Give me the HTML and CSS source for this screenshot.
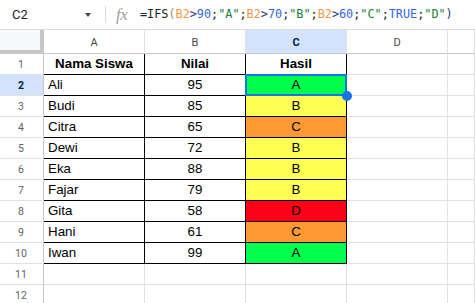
FILE: index.html
```html
<!DOCTYPE html>
<html lang="id">
<head>
<meta charset="utf-8">
<title>IFS Nilai Siswa</title>
<link rel="stylesheet" href="styles.css">
</head>
<body>
<div class="fbar">
  <div class="namebox"><span class="ref">C2</span><span class="caret"></span></div>
  <div class="sep"></div>
  <div class="fx">fx</div>
  <div class="formula">=IFS<span class="par">(</span><span class="rf">B2</span><span class="op">&gt;</span><span class="num">90</span>;<span class="str">"A"</span>;<span class="rf">B2</span><span class="op">&gt;</span><span class="num">70</span>;<span class="str">"B"</span>;<span class="rf">B2</span><span class="op">&gt;</span><span class="num">60</span>;<span class="str">"C"</span>;<span class="num">TRUE</span>;<span class="str">"D"</span><span class="par2">)</span></div>
</div>
<div class="grid">
  <div class="corner"></div>
  <div class="ch">A</div><div class="ch">B</div><div class="ch sel">C</div><div class="ch">D</div><div class="ch"></div>

  <div class="rh">1</div>
  <div class="c t b name-h">Nama Siswa</div><div class="c t b ctr">Nilai</div><div class="c t b ctr">Hasil</div><div class="c"></div><div class="c"></div>

  <div class="rh rsel">2</div>
  <div class="c t nm">Ali</div><div class="c t ctr">95</div><div class="c t ctr ga active">A<span class="selbox"><span class="handle"></span></span></div><div class="c"></div><div class="c"></div>

  <div class="rh">3</div>
  <div class="c t nm">Budi</div><div class="c t ctr">85</div><div class="c t ctr gb">B</div><div class="c"></div><div class="c"></div>

  <div class="rh">4</div>
  <div class="c t nm">Citra</div><div class="c t ctr">65</div><div class="c t ctr gc">C</div><div class="c"></div><div class="c"></div>

  <div class="rh">5</div>
  <div class="c t nm">Dewi</div><div class="c t ctr">72</div><div class="c t ctr gb">B</div><div class="c"></div><div class="c"></div>

  <div class="rh">6</div>
  <div class="c t nm">Eka</div><div class="c t ctr">88</div><div class="c t ctr gb">B</div><div class="c"></div><div class="c"></div>

  <div class="rh">7</div>
  <div class="c t nm">Fajar</div><div class="c t ctr">79</div><div class="c t ctr gb">B</div><div class="c"></div><div class="c"></div>

  <div class="rh">8</div>
  <div class="c t nm">Gita</div><div class="c t ctr">58</div><div class="c t ctr gd">D</div><div class="c"></div><div class="c"></div>

  <div class="rh">9</div>
  <div class="c t nm">Hani</div><div class="c t ctr">61</div><div class="c t ctr gc">C</div><div class="c"></div><div class="c"></div>

  <div class="rh">10</div>
  <div class="c t nm">Iwan</div><div class="c t ctr">99</div><div class="c t ctr ga">A</div><div class="c"></div><div class="c"></div>

  <div class="rh">11</div>
  <div class="c"></div><div class="c"></div><div class="c"></div><div class="c"></div><div class="c"></div>

  <div class="rh">12</div>
  <div class="c"></div><div class="c"></div><div class="c"></div><div class="c"></div><div class="c"></div>
</div>
</body>
</html>
```

FILE: styles.css
```css
html, body {
  margin: 0;
  padding: 0;
  background: #fff;
  overflow: hidden;
  height: 303px;
}
body {
  font-family: "Liberation Sans", Arial, sans-serif;
}

/* formula bar */
.fbar {
  display: flex;
  align-items: center;
  height: 29px;
  border-bottom: 1px solid #dadce0;
}
.namebox {
  width: 95px;
  box-sizing: border-box;
  padding: 0 4px 0 12px;
  display: flex;
  align-items: center;
  justify-content: space-between;
}
.ref {
  font-family: Roboto, "Liberation Sans", sans-serif;
  font-size: 13px;
  color: #202124;
}
.caret {
  width: 0;
  height: 0;
  border-left: 3.5px solid transparent;
  border-right: 3.5px solid transparent;
  border-top: 4px solid #444746;
}
.sep {
  width: 1px;
  height: 17px;
  background: #dadce0;
  margin-left: 10px;
}
.fx {
  margin-left: 10px;
  width: 15px;
  font-family: "Liberation Serif", "DejaVu Serif", serif;
  font-style: italic;
  font-size: 17px;
  color: #a0a0a0;
  letter-spacing: -0.5px;
  line-height: 29px;
}
.formula {
  margin-left: 9px;
  font-family: "DejaVu Sans Mono", "Liberation Mono", monospace;
  font-size: 11.8px;
  color: #202124;
  white-space: nowrap;
  line-height: 29px;
}
.rf { color: #f29a4a; }
.num { color: #3367d6; }
.str { color: #188038; }
.op { color: #2b3a7a; }
.par { color: #b58a5e; }
.par2 { color: #2b3a7a; }

/* grid */
.grid {
  display: grid;
  grid-template-columns: 44px 101px 101px 101px 101px 1fr;
  grid-template-rows: 24px repeat(12, 21px);
}
.grid > div {
  box-sizing: border-box;
  border-right: 1px solid #e1e1e1;
  border-bottom: 1px solid #e1e1e1;
  overflow: visible;
}
.grid > .corner {
  background: #f8f9fa;
  border-right: 4px solid #c4c7c5;
  border-bottom: 4px solid #c4c7c5;
}
.ch {
  display: flex;
  align-items: center;
  justify-content: center;
  font-family: Roboto, "Liberation Sans", sans-serif;
  font-size: 11px;
  color: #444746;
  padding-top: 1px;
}
.grid > .ch {
  border-bottom: 1px solid #c4c7c5;
}
.ch.sel {
  background: #d3e3fd;
  color: #041e49;
  font-weight: bold;
}
.rh {
  display: flex;
  align-items: center;
  justify-content: center;
  font-family: Roboto, "Liberation Sans", sans-serif;
  font-size: 10.5px;
  color: #5f6368;
  padding-right: 1px;
}
.grid > .rh {
  border-right: 1px solid #c4c7c5;
}
.rh.rsel {
  background: #d3e3fd;
  color: #041e49;
  font-weight: bold;
}
.c {
  font-size: 13.33px;
  line-height: 20px;
  color: #000;
  white-space: nowrap;
}
.grid > .t {
  border-right: 1px solid #000;
  border-bottom: 1px solid #000;
}
.b { font-weight: bold; }
.ctr { text-align: center; }
.name-h { text-align: center; }
.nm { padding-left: 4px; }
.ga { background: #00ff4d; }
.gb { background: #ffff55; }
.gc { background: #ff9933; }
.gd { background: #ff0016; }

.active { position: relative; }
.selbox {
  position: absolute;
  top: -1px;
  left: -1px;
  right: -1px;
  bottom: -1px;
  border: 2px solid #1a73e8;
  pointer-events: none;
}
.handle {
  position: absolute;
  right: -7px;
  bottom: -7px;
  width: 10px;
  height: 10px;
  border-radius: 50%;
  background: #1a73e8;
}
```
